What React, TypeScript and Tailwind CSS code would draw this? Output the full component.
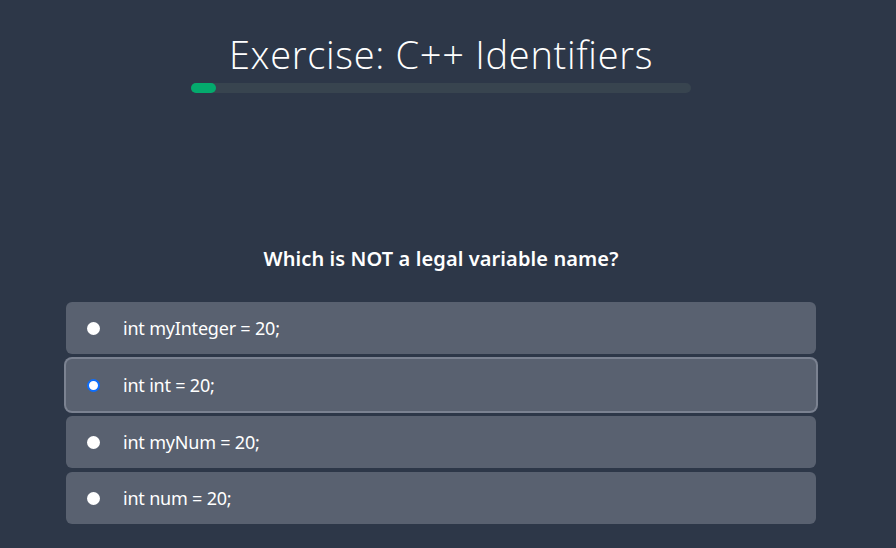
import React from "react";

const options = [
  "int myInteger = 20;",
  "int int = 20;",
  "int myNum = 20;",
  "int num = 20;",
];

export default function App() {
  const selected = 1;
  return (
    <div className="w-[896px] h-[548px] bg-[#2d3748] overflow-hidden flex">
      <div
        className="w-[882px] text-white flex flex-col items-center"
        style={{ fontFamily: '"Source Sans Pro", "Noto Sans", "Open Sans", sans-serif' }}
      >
        <h1
          className="mt-[29px] h-[50px] text-[38px] leading-[50px] font-light text-white tracking-[0.7px]"
          style={{ fontFamily: '"Segoe UI", "Open Sans", "Noto Sans", sans-serif' }}
        >
          Exercise: C++ Identifiers
        </h1>
        <div className="mt-[4px] w-[500px] h-[10px] rounded-full bg-[#38444f]">
          <div className="h-[10px] w-[25px] rounded-full bg-[#04aa6d]" />
        </div>
        <div className="mt-[153px] text-[20px] leading-[26px] font-semibold tracking-[0.1px]">
          Which is NOT a legal variable name?
        </div>
        <div className="mt-[30px] w-[750px] flex flex-col gap-1">
          {options.map((o, i) => {
            const sel = i === selected;
            return (
              <div
                key={i}
                className={
                  "h-[52px] rounded-[6px] bg-[#596170] flex items-center pl-[21px] " +
                  (sel ? "my-px ring-2 ring-[#7b8291]" : "")
                }
              >
                {sel ? (
                  <span className="w-[13px] h-[13px] rounded-full border-[2.5px] border-[#0d6efd] bg-white box-border" />
                ) : (
                  <span className="w-[13px] h-[13px] rounded-full bg-white" />
                )}
                <span className="ml-[23px] text-[18px] tracking-[-0.2px] text-white">{o}</span>
              </div>
            );
          })}
        </div>
      </div>
    </div>
  );
}
